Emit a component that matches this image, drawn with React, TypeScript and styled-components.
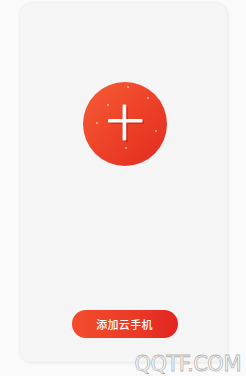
import React from 'react';
import styled, { createGlobalStyle } from 'styled-components';

const GlobalStyle = createGlobalStyle`
  html, body {
    margin: 0;
    padding: 0;
    background: #fafafa;
    font-family: "Noto Sans CJK SC", "Noto Sans", sans-serif;
  }
`;

const Page = styled.div`
  width: 246px;
  height: 376px;
  box-sizing: border-box;
  padding: 3px 19px 14px 20px;
  position: relative;
  overflow: hidden;
`;

const Card = styled.div`
  height: 100%;
  box-sizing: border-box;
  background: #f5f5f5;
  border-radius: 12px;
  box-shadow: 0 0 3px rgba(0, 0, 0, 0.08), 1px 1px 4px rgba(0, 0, 0, 0.05);
  display: flex;
  flex-direction: column;
  align-items: center;
  padding-top: 79px;
`;

const AddCircle = styled.div`
  width: 84px;
  height: 84px;
  border-radius: 50%;
  background: linear-gradient(135deg, #f45e36 0%, #ee4529 45%, #e22b20 100%);
  position: relative;
  margin-left: 2px;
  overflow: hidden;
`;

const Spark = styled.span<{ $x: number; $y: number }>`
  position: absolute;
  left: ${p => p.$x}px;
  top: ${p => p.$y}px;
  width: 2px;
  height: 2px;
  border-radius: 50%;
  background: rgba(255, 210, 190, 0.8);
`;

const Spacer = styled.div`
  flex: 1;
`;

const AddButton = styled.button`
  width: 106px;
  height: 28px;
  border: none;
  border-radius: 14px;
  background: linear-gradient(90deg, #f24c2c 0%, #ea3a26 60%, #e22421 100%);
  color: #fff;
  font-family: "Noto Sans CJK SC", sans-serif;
  font-size: 11px;
  font-weight: 500;
  letter-spacing: 0.3px;
  margin-bottom: 24px;
  margin-left: 2px;
  padding: 0;
`;

const Watermark = styled.div`
  position: absolute;
  right: 5px;
  bottom: 0;
  font-family: "DejaVu Sans", sans-serif;
  font-size: 21px;
  letter-spacing: -0.5px;
  color: #fff;
  -webkit-text-stroke: 0.8px #b4b4b4;
`;

function PlusMark() {
  return (
    <svg width="84" height="84" viewBox="0 0 84 84" style={{ position: 'absolute', left: 0, top: 0 }}>
      <g fill="#b81e14" opacity="0.55">
        <rect x="26.5" y="38.2" width="34.5" height="3.8" rx="1" />
        <rect x="41" y="24" width="3.8" height="36" rx="1" />
      </g>
      <g fill="#fff">
        <rect x="25" y="37" width="34.5" height="3.6" rx="1" />
        <rect x="39.6" y="22.5" width="3.6" height="36" rx="1" />
      </g>
    </svg>
  );
}

const sparks = [
  { x: 44, y: 4 },
  { x: 64, y: 15 },
  { x: 13, y: 40 },
  { x: 72, y: 48 },
  { x: 42, y: 65 },
  { x: 24, y: 22 },
];

export default function App() {
  return (
    <>
      <GlobalStyle />
      <Page>
        <Card>
          <AddCircle>
            {sparks.map((s, i) => (
              <Spark key={i} $x={s.x} $y={s.y} />
            ))}
            <PlusMark />
          </AddCircle>
          <Spacer />
          <AddButton>添加云手机</AddButton>
        </Card>
        <Watermark>QQTF.COM</Watermark>
      </Page>
    </>
  );
}
